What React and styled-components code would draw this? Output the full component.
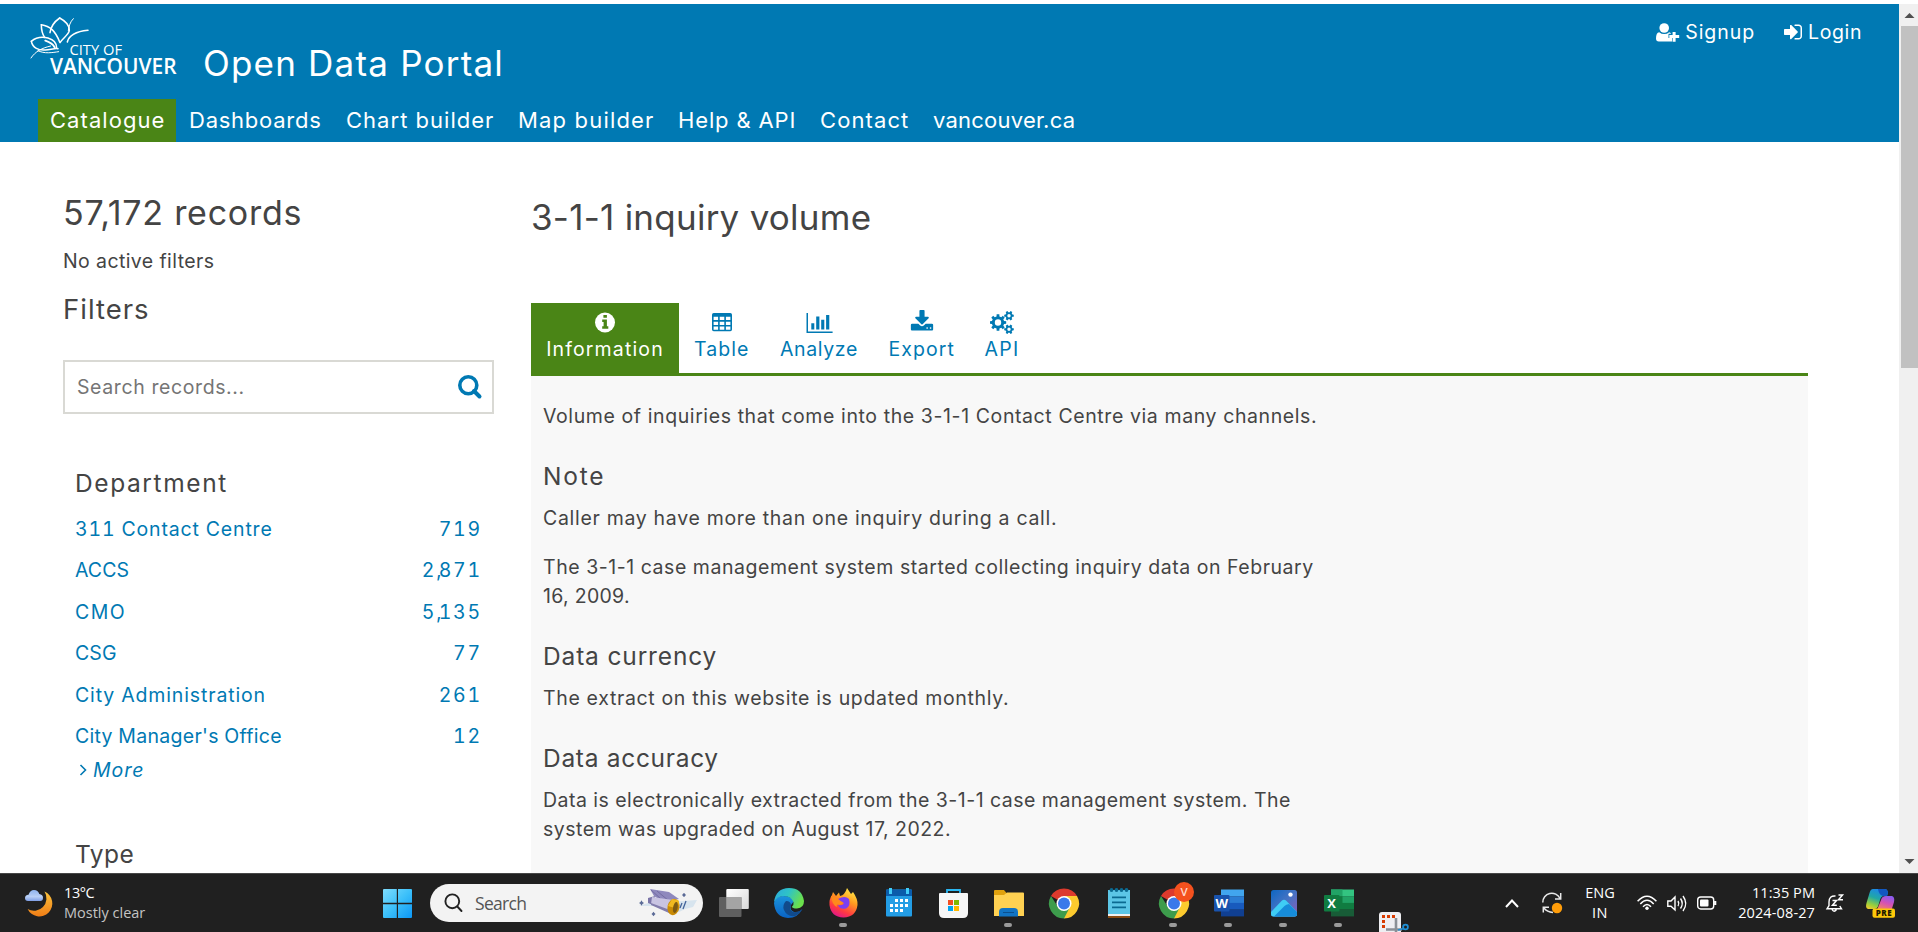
import React from "react";
import styled, { createGlobalStyle } from "styled-components";

const GlobalStyle = createGlobalStyle`
  * { box-sizing: border-box; }
  body { margin: 0; background: #fff; overflow: hidden; }
`;

const sans = '"Inter", "Liberation Sans", sans-serif';
const system = '"Open Sans", "Noto Sans", sans-serif';
const blue = "#0079b3";
const green = "#4a8516";
const ink = "#444";

const Screen = styled.div`
  width: 1918px;
  height: 932px;
  display: flex;
  flex-direction: column;
  overflow: hidden;
  font-family: ${sans};
  color: ${ink};
`;
const Viewport = styled.div`
  height: 869px;
  margin-top: 4px;
  display: flex;
  overflow: hidden;
`;
const Page = styled.div`
  width: 1899px;
  flex: none;
`;

/* Header */
const Header = styled.header`
  height: 138px;
  background: ${blue};
  color: #fff;
`;
const Brand = styled.div`
  height: 95px;
  padding-left: 24px;
  display: flex;
  align-items: flex-start;
`;
const Logo = styled.svg`
  width: 160px;
  height: 70px;
  margin-top: 8px;
  flex: none;
`;
const SiteTitle = styled.div`
  margin: 37px 0 0 19px;
  font-size: 35px;
  line-height: 44px;
  letter-spacing: 1.2px;
  white-space: nowrap;
`;
const Account = styled.div`
  margin: 16px 37px 0 auto;
  display: flex;
  gap: 29px;
`;
const AccountLink = styled.a`
  display: flex;
  align-items: center;
  gap: ${(p) => p.$gap}px;
  font-size: 19.5px;
  line-height: 24px;
  letter-spacing: ${(p) => p.$ls}px;
`;
const Nav = styled.nav`
  display: flex;
  height: 43px;
  padding-left: 38px;
  gap: 1px;
`;
const NavItem = styled.a`
  width: ${(p) => p.$w}px;
  padding-left: 12px;
  font-size: 22px;
  line-height: 43px;
  white-space: nowrap;
  letter-spacing: ${(p) => p.$ls}px;
  background: ${(p) => (p.$active ? green : "transparent")};
`;

/* Scroll bar */
const ScrollBar = styled.div`
  flex: 1;
  background: #f0f0f0;
  display: flex;
  flex-direction: column;
  align-items: flex-end;
  justify-content: space-between;
`;
const ScrollArrow = styled.svg`
  width: 17px;
  height: 22px;
  flex: none;
`;
const Thumb = styled.div`
  width: 17px;
  height: 342px;
  margin-bottom: auto;
  background: #c1c1c1;
`;

/* Body columns */
const Columns = styled.div`
  display: flex;
`;
const Sidebar = styled.aside`
  width: 431px;
  margin: 51px 37px 0 63px;
  flex: none;
`;
const Records = styled.h1`
  margin: 0;
  font-size: 34px;
  font-weight: 400;
  line-height: 40px;
  letter-spacing: 0.75px;
`;
const ActiveFilters = styled.p`
  margin: 13px 0 16px;
  font-size: 19.5px;
  line-height: 30px;
  letter-spacing: 0.4px;
`;
const FiltersTitle = styled.h2`
  margin: 0;
  font-size: 27.5px;
  font-weight: 400;
  line-height: 34px;
  letter-spacing: 1px;
`;
const SearchBox = styled.div`
  height: 54px;
  margin: 34px 0 54px;
  padding: 0 10px 0 12px;
  border: 2px solid #d9d9d4;
  display: flex;
  align-items: center;
  justify-content: space-between;
  font-size: 19.5px;
  letter-spacing: 0.6px;
  color: #757575;
`;
const Facet = styled.section`
  padding-left: 12px;
  width: 419px;
  margin-bottom: 57px;
`;
const FacetTitle = styled.h3`
  margin: 0 0 11px;
  font-size: 24.5px;
  font-weight: 400;
  line-height: 30px;
  letter-spacing: ${(p) => p.$ls}px;
`;
const FacetRow = styled.a`
  display: flex;
  justify-content: space-between;
  font-size: 19.5px;
  line-height: 41.4px;
  color: ${blue};
`;
const FacetName = styled.span`
  letter-spacing: ${(p) => p.$ls}px;
  font-variant-numeric: tabular-nums;
`;
const FacetCount = styled.span`
  letter-spacing: 1.8px;
  font-variant-numeric: tabular-nums;
`;
const Separator = styled.span`
  letter-spacing: -2.8px;
`;
const More = styled.a`
  display: flex;
  align-items: center;
  gap: 6px;
  margin-top: 1px;
  padding-left: 4px;
  font-size: 19.5px;
  line-height: 24px;
  font-style: italic;
  letter-spacing: 1px;
  color: ${blue};
`;

const Main = styled.main`
  width: 1277px;
  margin-top: 53px;
`;
const DatasetTitle = styled.h1`
  margin: 0 0 64px;
  font-size: 35px;
  font-weight: 400;
  line-height: 44px;
  letter-spacing: 0.25px;
`;
const Tabs = styled.div`
  height: 73px;
  display: flex;
  border-bottom: 3px solid ${green};
`;
const Tab = styled.a`
  width: ${(p) => p.$w}px;
  padding-top: 7px;
  display: flex;
  flex-direction: column;
  align-items: center;
  gap: 3px;
  font-size: 19.5px;
  line-height: 24px;
  letter-spacing: ${(p) => p.$ls}px;
  color: ${(p) => (p.$active ? "#fff" : blue)};
  background: ${(p) => (p.$active ? green : "transparent")};
`;
const TabIcon = styled.svg`
  width: ${(p) => p.$w || 24}px;
  height: 24px;
  fill: currentColor;
`;
const Panel = styled.div`
  height: 520px;
  padding: 26px 0 0 12px;
  background: #f8f8f8;
`;
const Paragraph = styled.p`
  margin: 0 0 ${(p) => p.$after ?? 29.5}px;
  font-size: 19.5px;
  line-height: 29.4px;
`;
const Line = styled.span`
  display: block;
  white-space: nowrap;
  letter-spacing: ${(p) => p.$ls}px;
`;
const Heading = styled.h3`
  margin: 0 0 13px;
  font-size: 24.5px;
  font-weight: 400;
  line-height: 30px;
  letter-spacing: ${(p) => p.$ls}px;
`;

/* Taskbar */
const TaskBar = styled.footer`
  height: 59px;
  border-top: 1px solid #474747;
  background: #202020;
  display: flex;
  align-items: center;
  font-family: ${system};
  color: #fff;
`;
const Weather = styled.div`
  width: 383px;
  padding-left: 24px;
  display: flex;
  align-items: center;
  gap: 11px;
  flex: none;
`;
const Lines = styled.div`
  width: ${(p) => (p.$w ? p.$w + "px" : "auto")};
  text-align: ${(p) => p.$align || "left"};
  font-size: 14.5px;
  line-height: 20px;
  white-space: nowrap;
`;
const TextLine = styled.div`
  letter-spacing: ${(p) => p.$ls || 0}px;
  color: ${(p) => (p.$dim ? "#c4c4c4" : "#fff")};
`;
const TaskSearch = styled.div`
  width: 273px;
  height: 38px;
  margin: 0 3px 0 18px;
  padding: 0 4px 0 13px;
  border-radius: 19px;
  background: #f3f3f3;
  display: flex;
  align-items: center;
  flex: none;
`;
const TaskSearchLabel = styled.span`
  margin: 0 auto 0 12px;
  font-size: 17.5px;
  letter-spacing: -0.7px;
  color: #555;
`;
const Apps = styled.div`
  display: flex;
`;
const AppButton = styled.div`
  width: 55px;
  height: 58px;
  padding-top: ${(p) => (p.$low ? 35 : 14)}px;
  display: flex;
  justify-content: center;
  overflow: hidden;
  position: relative;
`;
const RunningDot = styled.i`
  position: absolute;
  left: 23px;
  top: 49px;
  width: 8px;
  height: 4px;
  border-radius: 2px;
  background: #9a9a9a;
`;
const Badge = styled.b`
  position: absolute;
  left: 28px;
  top: 8px;
  width: 20px;
  height: 20px;
  border-radius: 50%;
  background: #f4511e;
  color: #ffd8cc;
  font: 600 11.5px/20px ${system};
  text-align: center;
`;
const Tray = styled.div`
  flex: 1;
  padding-right: 23px;
  display: flex;
  align-items: center;
  justify-content: flex-end;
`;
const TraySlot = styled.div`
  display: flex;
  margin-right: ${(p) => p.$after || 0}px;
`;
const Glyph = styled.svg`
  display: block;
  flex: none;
  overflow: visible;
`;

const VancouverLogo = () => (
  <Logo viewBox="24 12 160 70">
    <g transform="translate(26 12) scale(.3333)" fill="none" stroke="#fff" strokeWidth="4.6" strokeLinecap="round">
      <path d="M101 18C84 30 74 46 72 62" />
      <path d="M101 18C120 28 131 42 130 56C127 70 110 78 102 92" />
      <path d="M142 20C132 30 129 42 127 56" strokeWidth="3" />
      <path d="M46 38C46 54 49 66 56 76" />
      <path d="M46 38C72 42 88 56 101 90" />
      <path d="M186 55C156 58 130 66 124 90" />
      <path d="M16 88C30 76 48 74 66 78C84 83 92 94 92 108" />
      <path d="M16 88C20 108 38 116 58 114C76 112 88 108 96 110" />
      <path d="M58 86C76 92 82 98 86 106" strokeWidth="6" />
      <path d="M15 138C28 118 48 108 74 102" strokeWidth="3" />
      <path d="M36 116C54 126 80 122 98 119" strokeWidth="3" />
    </g>
    <text x="69.5" y="54.5" fill="#fff" fontFamily="Open Sans" fontSize="15" textLength="52.5" lengthAdjust="spacingAndGlyphs">CITY OF</text>
    <text x="50" y="74.4" fill="#fff" fontFamily="Open Sans" fontWeight="600" fontSize="21" textLength="126.5" lengthAdjust="spacingAndGlyphs">VANCOUVER</text>
  </Logo>
);

const UserPlus = () => (
  <Glyph width="24" height="19" viewBox="0 0 24 19" fill="#fff">
    <circle cx="8.2" cy="5" r="4.8" />
    <path d="M3.2 9.2q2.2 1.9 5 1.9t5-1.9q1.2.3 2 1.5h-2.7v4.2h3.5v3.5H2.8Q0 18.400 0 15.500 0 9.800 3.200 9.200z" />
    <path d="M16.600 8.900h3v3.200h3.600v3h-3.600v3.600h-3v-3.600h-3.300v-3h3.300z" />
  </Glyph>
);
const SignIn = () => (
  <Glyph width="18" height="16" viewBox="128 256 1536 1280" fill="#fff">
    <path d="M1312 896q0 26-19 45l-544 544q-19 19-45 19t-45-19-19-45v-288h-448q-26 0-45-19t-19-45v-384q0-26 19-45t45-19h448v-288q0-26 19-45t45-19 45 19l544 544q19 19 19 45zm352-352v704q0 119-84.500 203.500t-203.500 84.500h-320q-32 0-32-32v-64q0-32 32-32h320q66 0 113-47t47-113v-704q0-66-47-113t-113-47h-320q-32 0-32-32v-64q0-32 32-32h320q119 0 203.500 84.500t84.500 203.500z" />
  </Glyph>
);
const Magnifier = () => (
  <Glyph width="24" height="24" viewBox="0 0 24 24" fill="none" stroke={blue}>
    <circle cx="10.300" cy="10.300" r="8.500" strokeWidth="3.600" />
    <path d="M16 16L21.500 21.500" strokeWidth="4" strokeLinecap="round" />
  </Glyph>
);

const InfoIcon = () => (
  <TabIcon viewBox="0 0 24 24">
    <circle cx="12" cy="12.500" r="10" />
    <path fill={green} d="M10.400 4.900h3.500v2.900h-3.500zM9.200 9.600h4.700v6.600h1.400v2.500H9.200v-2.500h1.400v-4.200H9.200z" />
  </TabIcon>
);
const TableIcon = () => (
  <TabIcon viewBox="0 0 24 24">
    <path fillRule="evenodd" d="M3.700 3h16.600q1.700 0 1.700 1.700v14.800q0 1.700-1.700 1.700H3.700Q2 21.200 2 19.500V4.700Q2 3 3.700 3zM3.600 6.800v3.300h4.500V6.800zM9.700 6.800v3.300h4.600V6.800zM15.900 6.800v3.300h4.500V6.800zM3.600 11.700v3.200h4.500v-3.200zM9.700 11.700v3.200h4.600v-3.200zM15.900 11.700v3.200h4.500v-3.200zM3.600 16.500v3.200h4.500v-3.200zM9.700 16.500v3.200h4.600v-3.200zM15.900 16.500v3.200h4.500v-3.200z" />
  </TabIcon>
);
const BarsIcon = () => (
  <TabIcon $w={27} viewBox="0 0 27 24">
    <path d="M.500 3H2v18.400h24.600V23H.500zM5.300 13.200h3v6.400h-3zM10.200 6.600h3.200v13h-3.200zM15.200 9.800h3.100v9.800h-3.100zM20.100 4.900h3.200v14.700h-3.200z" />
  </TabIcon>
);
const DownloadIcon = () => (
  <TabIcon viewBox="32 0 1728 1792">
    <path d="M1344 1344q0-26-19-45t-45-19-45 19-19 45 19 45 45 19 45-19 19-45zm256 0q0-26-19-45t-45-19-45 19-19 45 19 45 45 19 45-19 19-45zm128-224v320q0 40-28 68t-68 28h-1472q-40 0-68-28t-28-68v-320q0-40 28-68t68-28h465l135 136q58 56 136 56t136-56l136-136h464q40 0 68 28t28 68zm-325-569q17 41-14 70l-448 448q-18 19-45 19t-45-19l-448-448q-31-29-14-70 17-39 59-39h256v-448q0-26 19-45t45-19h256q26 0 45 19t19 45v448h256q42 0 59 39z" />
  </TabIcon>
);
const gear = (cx, cy, outer, inner, teeth) => {
  const pts = [];
  for (let i = 0; i < teeth; i++) {
    const a = (i / teeth) * Math.PI * 2;
    const s = Math.PI / teeth;
    [[-0.6, inner], [-0.42, outer], [0.42, outer], [0.6, inner]].forEach(([k, r]) =>
      pts.push(`${(cx + r * Math.cos(a + k * s)).toFixed(2)} ${(cy + r * Math.sin(a + k * s)).toFixed(2)}`)
    );
  }
  return `M${pts.join("L")}z`;
};
const hole = (cx, cy, r) => `M${cx - r} ${cy}a${r} ${r} 0 1 0 ${2 * r} 0a${r} ${r} 0 1 0 ${-2 * r} 0z`;
const CogsIcon = () => (
  <TabIcon viewBox="0 0 24 24">
    <path fillRule="evenodd" d={gear(8, 12.5, 8.3, 6.2, 8) + hole(8, 12.5, 3.2)} />
    <path fillRule="evenodd" d={gear(19, 5.7, 4.9, 3.6, 6) + hole(19, 5.7, 1.7)} />
    <path fillRule="evenodd" d={gear(19, 19.3, 4.9, 3.6, 6) + hole(19, 19.3, 1.7)} />
  </TabIcon>
);

const navItems = [
  ["Catalogue", 138, 1.05],
  ["Dashboards", 156, 0.75],
  ["Chart builder", 171, 1.02],
  ["Map builder", 159, 1.18],
  ["Help & API", 141, 0.85],
  ["Contact", 112, 1.1],
  ["vancouver.ca", 160, 0.23],
];
const departments = [
  ["311 Contact Centre", "719", 0.83],
  ["ACCS", "2,871", 0.08],
  ["CMO", "5,135", 1.4],
  ["CSG", "77", 0.12],
  ["City Administration", "261", 0.86],
  ["City Manager's Office", "12", 0.29],
];
const tabs = [
  ["Information", 148, 1.15, InfoIcon],
  ["Table", 85.5, 1.05, TableIcon],
  ["Analyze", 109, 0.64, BarsIcon],
  ["Export", 96.5, 1.07, DownloadIcon],
  ["API", 64, 1.3, CogsIcon],
];

/* Taskbar drawings */
const MoonIcon = () => (
  <Glyph width="29" height="29" viewBox="0 0 29 29">
    <defs>
      <linearGradient id="moon" x1="0" y1="0" x2="0" y2="1"><stop stopColor="#fbc33c" /><stop offset="1" stopColor="#f07d16" /></linearGradient>
      <linearGradient id="cloud" x1="0" y1="0" x2="0" y2="1"><stop stopColor="#8fb3ee" /><stop offset=".6" stopColor="#b9d0f6" /><stop offset="1" stopColor="#7f9fe6" /></linearGradient>
    </defs>
    <path fill="url(#moon)" d="M20.500 2.500A13 13 0 1 1 3.600 20A12.500 12.500 0 0 0 20.500 2.500z" />
    <path fill="url(#cloud)" d="M4 12Q1 12 1 9t3.500-3.300Q6 1 10 1t5.300 4Q19 5.500 19 8.800T16 12z" />
  </Glyph>
);
const WindowsLogo = () => (
  <Glyph width="29" height="29" viewBox="0 0 29 29">
    <defs><linearGradient id="win" gradientUnits="userSpaceOnUse" x1="0" y1="0" x2="29" y2="29"><stop stopColor="#7fdcfc" /><stop offset=".5" stopColor="#3cc0fa" /><stop offset="1" stopColor="#0c97f6" /></linearGradient></defs>
    <path fill="url(#win)" d="M0 1q0-1 1-1h12.800v13.800H0zM15 0h13q1 0 1 1v12.800H15zM0 15.200h13.800V29H1q-1 0-1-1zM15 15.200h14V28q0 1-1 1H15z" />
  </Glyph>
);
const ThinSearch = () => (
  <Glyph width="20" height="20" viewBox="0 0 20 20" fill="none" stroke="#222" strokeWidth="1.900" strokeLinecap="round">
    <circle cx="9.300" cy="8.300" r="6.900" /><path d="M14.300 13.500L18.500 18" />
  </Glyph>
);
const Telescope = () => (
  <Glyph width="60" height="30" viewBox="0 0 60 30">
    <path fill="#cfe0ec" opacity=".8" d="M0 18L18 12L30 14L58 12L54 19L46 21L40 24L18 18z" />
    <path fill="#8e88bd" d="M11 1L30 4L40 11L24 14L15 8z" />
    <path fill="#b7b1dc" d="M12 2L22 11M18 3L30 13" stroke="#6c6599" strokeWidth=".8" />
    <path fill="#7b75a8" d="M9 10L16 8L14 17L9 15z" />
    <path fill="#c9c4e2" d="M13 9L34 12L31 25L12 16z" />
    <path fill="#837dac" d="M12 15L31 22L30 25L12 17z" />
    <ellipse cx="34.500" cy="19" rx="6" ry="8.300" fill="#c98a05" transform="rotate(12 34.500 19)" />
    <path fill="#f0b920" d="M33 11L39 12Q41 13 39 18L36 20L29 18z" />
    <ellipse cx="36.500" cy="19.500" rx="2.300" ry="5.500" fill="#7d5a12" transform="rotate(12 36.500 19)" />
    <path stroke="#42639a" strokeWidth="1.300" d="M41 20L43 15M44 21L47 13" />
    <path fill="#5a6a96" d="M1.500 14l1-1.800 1 1.800 1.500 1-1.500 1-1 1.800-1-1.800L0 15zM44 6l1-1.300 1 1.300 1 1-1 1-1 1.300L44 8l-1-1zM13.500 25l1-1.300 1 1.300 1 1-1 1-1 1.300-1-1.300-1-1z" />
  </Glyph>
);
const TaskView = () => (
  <Glyph width="30" height="30" viewBox="0 0 30 30">
    <defs><linearGradient id="tv" x1="0" y1="0" x2="1" y2="1"><stop stopColor="#fff" /><stop offset="1" stopColor="#d9d9d9" /></linearGradient></defs>
    <rect x="7.300" y="1" width="22.500" height="20" rx="1" fill="url(#tv)" />
    <rect x="0" y="9" width="22.500" height="20" rx="1" fill="#686868" opacity=".88" />
    <path fill="#a4a4a4" d="M7.300 9h15.200v12H7.300z" />
  </Glyph>
);
const Edge = () => (
  <Glyph width="30" height="30" viewBox="0 0 30 30">
    <defs>
      <linearGradient id="eg1" x1="0" y1="0" x2="1" y2=".4"><stop stopColor="#2aa8e0" /><stop offset=".5" stopColor="#2fc3c6" /><stop offset="1" stopColor="#6be04c" /></linearGradient>
      <linearGradient id="eg2" x1="0" y1="0" x2="0" y2="1"><stop stopColor="#1b93dc" /><stop offset="1" stopColor="#0a63c4" /></linearGradient>
    </defs>
    <path fill="url(#eg2)" d="M0 15Q1 8 9 8T20 13L17 17Q15 22 20 24Q25 25 28 21Q24 30 14 30Q1 29 0 15z" />
    <path fill="#114a8b" d="M12 13Q8 17 10 22Q13 29 21 28Q26 26 28.500 21Q24 25 19 24Q14 21 17 17.500Q17 13 12 13z" />
    <path fill="url(#eg1)" d="M0 14Q2 0 15 0Q28 0 30 13Q30 20 23 20.500Q18 20.500 18 18.500Q20 17 19.500 14Q17 8 10 8Q3 8 0 14z" />
  </Glyph>
);
const Firefox = () => (
  <Glyph width="29" height="30" viewBox="0 0 29 30">
    <defs>
      <linearGradient id="ff" x1=".8" y1="0" x2=".3" y2="1"><stop stopColor="#fff04a" /><stop offset=".4" stopColor="#ff9a20" /><stop offset=".75" stopColor="#ff3a42" /><stop offset="1" stopColor="#e0158c" /></linearGradient>
    </defs>
    <path fill="url(#ff)" d="M18 0Q20 3 22 6L24 4Q29 11 28.500 17Q27 29 14.500 29.500Q2 29 .500 17Q0 11 3 7L4 4L7 8L10 4.500L11 8Q16 7 18 0z" />
    <path fill="#7a3ff0" d="M9 11Q16 7 20 11Q22 18 17 20.500Q11 22 9 17Q14 18 15 15Q12 14 9 11z" />
    <path fill="#ff8a1c" d="M2 8L7 9L10 12L14 14.500Q13 17.500 9 16.500Q7 16 8 19Q3 17 2 8z" />
  </Glyph>
);
const Calendar = () => (
  <Glyph width="26" height="30" viewBox="0 0 26 30">
    <rect y="1.500" width="26" height="27" rx="1" fill="#239de5" />
    <path fill="#0a5cab" d="M1 1.500h24q1 0 1 1V8H0V2.500q0-1 1-1z" />
    <path fill="#41cdf8" d="M3 0h3v6H3zM20 0h3v6h-3z" />
    <path fill="#fff" d="M9 11h3v3H9zM14 11h3v3h-3zM19 11h3v3h-3zM4 16h3v3H4zM9 16h3v3H9zM14 16h3v3h-3zM19 16h3v3h-3zM4 21h3v3H4zM9 21h3v3H9zM14 21h3v3h-3z" />
  </Glyph>
);
const Store = () => (
  <Glyph width="29" height="30" viewBox="0 0 29 30">
    <path fill="none" stroke="#2bb7f2" strokeWidth="1.800" d="M8 7V2h13v5" />
    <path fill="#f6f6f6" d="M0 6q0-1 1-1h27q1 0 1 1v19q0 5-5 5H5q-5 0-5-5z" />
    <path fill="#f25022" d="M9 12h5v5H9z" /><path fill="#7fba00" d="M15 12h5v5h-5z" /><path fill="#00a4ef" d="M9 18h5v5H9z" /><path fill="#ffb900" d="M15 18h5v5h-5z" />
  </Glyph>
);
const Folder = () => (
  <Glyph width="30" height="30" viewBox="0 0 30 30">
    <path fill="#e0a10e" d="M0 3q0-1 1-1h9l2.500 3v3H0z" />
    <path fill="#ffd152" d="M0 7l10 0 3-2.500h16q1 0 1 1V28H0z" />
    <path fill="#1274c4" d="M5 24q0-4 4-4h11q4 0 4 4v4.500H5z" /><path fill="#0b4f8d" d="M9 24h11v1H9z" />
  </Glyph>
);
const Chrome = () => (
  <Glyph width="30" height="31" viewBox="0 0 30 30">
    <path fill="#dc3a2d" d="M15 15L2 7.500A15 15 0 0 1 28 7.500z" />
    <path fill="#fcca2e" d="M15 15L15 7.500L28 7.500A15 15 0 0 1 15 30z" />
    <path fill="#3d9c4c" d="M15 30A15 15 0 0 1 2 7.500L9 18.500L21 18.500z" />
    <circle cx="15" cy="15" r="7.500" fill="#fff" /><circle cx="15" cy="15" r="6" fill="#3a79ea" />
  </Glyph>
);
const Notepad = () => (
  <Glyph width="22" height="30" viewBox="0 0 22 30">
    <path fill="#8a4b12" d="M0 26h22v4H0z" /><path fill="#f0f0f0" d="M0 25h22v3H0z" />
    <path fill="#5cc6e6" d="M0 2h22v24H0z" />
    <g fill="#0b6a91"><circle cx="3.500" cy="2" r="1.900" /><circle cx="8.500" cy="2" r="1.900" /><circle cx="13.500" cy="2" r="1.900" /><circle cx="18.500" cy="2" r="1.900" /><path d="M4 8.500h14v1.800H4zM4 13.500h14v1.800H4zM4 18.500h14v1.800H4z" /></g>
  </Glyph>
);
const Office = ({ stripes, box, letter }) => (
  <Glyph width="30" height="30" viewBox="0 0 30 30">
    {stripes.map((c, i) => <rect key={i} x="7" y={1.5 + i * 6.7} width="23" height="6.800" fill={c} />)}
    {letter === "X" && <path fill="#21a366" d="M7 1.500h11.500v6.700H7z" />}
    {letter === "X" && <path fill="#107c41" d="M7 8.200h11.500v6.800H7z" />}
    <rect y="7" width="15.500" height="16.500" rx="1" fill={box} />
    <text x="7.700" y="19.800" textAnchor="middle" fontFamily="Open Sans" fontWeight="700" fontSize="13" fill="#fff">{letter}</text>
  </Glyph>
);
const Photos = () => (
  <Glyph width="26" height="30" viewBox="0 0 26 30">
    <defs><linearGradient id="ph" x1="0" y1="0" x2="1" y2="1"><stop stopColor="#0d66c2" /><stop offset=".5" stopColor="#4673c4" /><stop offset="1" stopColor="#8b5bb6" /></linearGradient></defs>
    <rect y="2" width="26" height="26.500" rx="2.500" fill="url(#ph)" />
    <path fill="#3fcdf5" d="M0 24L10.500 13Q13 10.500 15.500 13L26 24V26q0 2.500-2.500 2.500H2.500Q0 28.500 0 26z" />
    <path fill="#168cda" d="M3 28.500L13.500 18Q15 16.500 18 16L26 24V26q0 2.500-2.500 2.500z" />
    <circle cx="19.500" cy="6.600" r="2.200" fill="#fff" />
  </Glyph>
);
const Snip = () => (
  <Glyph width="30" height="30" viewBox="0 0 30 30">
    <path fill="#eeeef2" d="M0 6q0-3 3-3h16q3 0 3 3v26H0z" />
    <path fill="#d83b01" d="M3 6h3v3H3zM8 6h3v3H8zM13 6h3v3h-3zM3 11h3v3H3zM3 16h3v3H3z" />
    <path fill="none" stroke="#8a8f96" strokeWidth="2.600" d="M17 9V24M7 20.500H23" />
    <circle cx="26.500" cy="18" r="2.400" fill="none" stroke="#1f8fd4" strokeWidth="1.800" />
    <path stroke="#1f8fd4" strokeWidth="1.800" d="M19 21L25 19.500" />
  </Glyph>
);

const apps = [
  { icon: <TaskView /> },
  { icon: <Edge /> },
  { icon: <Firefox />, running: true },
  { icon: <Calendar /> },
  { icon: <Store /> },
  { icon: <Folder />, running: true },
  { icon: <Chrome /> },
  { icon: <Notepad /> },
  { icon: <Chrome />, running: true, badge: "V" },
  { icon: <Office letter="W" box="#1953ad" stripes={["#41a5ee", "#2b7cd3", "#185abd", "#103f91"]} />, running: true },
  { icon: <Photos />, running: true },
  { icon: <Office letter="X" box="#107c41" stripes={["#33c481", "#21a366", "#107c41", "#185c37"]} />, running: true },
  { icon: <Snip />, low: true },
];

const SystemTray = () => (
  <Tray>
    <TraySlot $after={23}>
      <Glyph width="14" height="9" viewBox="0 0 14 9" fill="none" stroke="#fff" strokeWidth="2"><path d="M1 8L7 1.500L13 8" /></Glyph>
    </TraySlot>
    <TraySlot $after={22}>
      <Glyph width="20" height="20" viewBox="0 0 20 20" fill="none" stroke="#e8e8e8" strokeWidth="1.500">
        <path d="M.800 9.500A9 9 0 0 1 18 5.500M18.700 0V6H13M11 19.500Q5 19 2 15M1.300 19.500V14.300H7" />
        <circle cx="15" cy="15" r="5.200" fill="#ff9d0a" stroke="none" />
      </Glyph>
    </TraySlot>
    <TraySlot $after={21}>
      <Lines $w={32} $align="center"><TextLine>ENG</TextLine><TextLine $ls={0.5}>IN</TextLine></Lines>
    </TraySlot>
    <TraySlot $after={10}>
      <Glyph width="20" height="16" viewBox="0 0 20 16" fill="none" stroke="#fff" strokeWidth="1.500">
        <path d="M.600 6.300Q10-4 19.400 6.300M3.300 9Q10 1.600 16.700 9M6 11.800Q10 7.300 14 11.800" /><circle cx="10" cy="13.300" r="1.700" fill="#fff" stroke="none" />
      </Glyph>
    </TraySlot>
    <TraySlot $after={10}>
      <Glyph width="20" height="17" viewBox="0 0 20 17" fill="none" stroke="#fff" strokeWidth="1.400">
        <path d="M.800 6H4L8 2V15L4 11.300H.800zM11 6Q12.600 8.500 11 11M13.500 3.500Q17 8.500 13.500 13.500M16 1Q21.500 8.500 16 16" />
      </Glyph>
    </TraySlot>
    <TraySlot $after={20}>
      <Glyph width="20" height="14" viewBox="0 0 20 14" fill="none" stroke="#fff" strokeWidth="1.400">
        <rect x=".700" y="1" width="16" height="12" rx="3" /><rect x="3" y="3.500" width="8.500" height="7" rx="1" fill="#fff" stroke="none" /><path d="M18.200 5V9" strokeWidth="2.200" />
      </Glyph>
    </TraySlot>
    <TraySlot $after={11}>
      <Lines $w={78} $align="right"><TextLine $ls={0.06}>11:35 PM</TextLine><TextLine $ls={0.12}>2024-08-27</TextLine></Lines>
    </TraySlot>
    <TraySlot $after={22}>
      <Glyph width="18" height="19" viewBox="0 0 18 19" fill="none" stroke="#fff" strokeWidth="1.400">
        <path d="M9.500 2Q3 1.500 3 8V11.500L1 14.800H15.500L13.800 12M6 15.500Q8 19 10.500 15.500" />
        <path d="M6.500 6.500H10.500L6.500 11.200H10.800M12.500 1H16.500L12.500 5.800H17" strokeWidth="1.500" />
      </Glyph>
    </TraySlot>
    <TraySlot>
      <Glyph width="29" height="29" viewBox="0 0 29 29">
        <defs>
          <linearGradient id="cp1" x1=".6" y1="0" x2=".2" y2="1"><stop stopColor="#1c85ec" /><stop offset=".45" stopColor="#21a8a4" /><stop offset=".8" stopColor="#9bcf3b" /><stop offset="1" stopColor="#e8c92d" /></linearGradient>
          <linearGradient id="cp2" x1=".7" y1="0" x2=".3" y2="1"><stop stopColor="#8a5cf0" /><stop offset=".5" stopColor="#d552b4" /><stop offset="1" stopColor="#f5855c" /></linearGradient>
        </defs>
        <path fill="url(#cp1)" d="M7 0H19Q21.500 0 22 4L21 7H18Q15 7 14 11L12.500 16Q11.500 20 8 20H2Q-1 19 .500 14L3.500 4Q4.500 0 7 0z" />
        <path fill="#1257c0" d="M12 0H19Q21.500 0 22 4L21 7H17Q13 6 12 0z" />
        <path fill="url(#cp2)" d="M20 7H26Q29 8 28 13L25.500 21H11L15 11Q16 7 20 7z" />
        <rect x="6.500" y="19.500" width="22.500" height="9.300" rx="2" fill="#fdc80a" />
        <text x="17.900" y="27.100" textAnchor="middle" fontFamily="Open Sans" fontWeight="800" fontSize="8" letterSpacing=".5" fill="#1d1a00">PRE</text>
      </Glyph>
    </TraySlot>
  </Tray>
);

const Count = ({ value }) => {
  const [head, tail] = value.split(",");
  return (
    <FacetCount>
      {head}
      {tail && <><Separator>,</Separator>{tail}</>}
    </FacetCount>
  );
};

export default function App() {
  return (
    <Screen>
      <GlobalStyle />
      <Viewport>
        <Page>
          <Header>
            <Brand>
              <VancouverLogo />
              <SiteTitle>Open Data Portal</SiteTitle>
              <Account>
                <AccountLink $gap={5} $ls={0.95}><UserPlus />Signup</AccountLink>
                <AccountLink $gap={6} $ls={0.6}><SignIn />Login</AccountLink>
              </Account>
            </Brand>
            <Nav>
              {navItems.map(([label, w, ls], i) => (
                <NavItem key={label} $w={w} $ls={ls} $active={i === 0}>{label}</NavItem>
              ))}
            </Nav>
          </Header>
          <Columns>
            <Sidebar>
              <Records>57,172 records</Records>
              <ActiveFilters>No active filters</ActiveFilters>
              <FiltersTitle>Filters</FiltersTitle>
              <SearchBox>Search records...<Magnifier /></SearchBox>
              <Facet>
                <FacetTitle $ls={1.6}>Department</FacetTitle>
                {departments.map(([name, count, ls]) => (
                  <FacetRow key={name}>
                    <FacetName $ls={ls}>{name}</FacetName>
                    <Count value={count} />
                  </FacetRow>
                ))}
                <More>
                  <Glyph width="8" height="12" viewBox="0 0 8 12" fill="none" stroke={blue} strokeWidth="1.600"><path d="M1.500 1L6.500 6L1.500 11" /></Glyph>
                  More
                </More>
              </Facet>
              <Facet>
                <FacetTitle $ls={0.5}>Type</FacetTitle>
              </Facet>
            </Sidebar>
            <Main>
              <DatasetTitle>3-1-1 inquiry volume</DatasetTitle>
              <Tabs>
                {tabs.map(([label, w, ls, Icon], i) => (
                  <Tab key={label} $w={w} $ls={ls} $active={i === 0}><Icon />{label}</Tab>
                ))}
              </Tabs>
              <Panel>
                <Paragraph>
                  <Line $ls={0.597}>Volume of inquiries that come into the 3-1-1 Contact Centre via many channels.</Line>
                </Paragraph>
                <Heading $ls={1.8}>Note</Heading>
                <Paragraph $after={19.5}>
                  <Line $ls={0.69}>Caller may have more than one inquiry during a call.</Line>
                </Paragraph>
                <Paragraph>
                  <Line $ls={0.54}>The 3-1-1 case management system started collecting inquiry data on February</Line>
                  <Line $ls={0.305}>16, 2009.</Line>
                </Paragraph>
                <Heading $ls={0.85}>Data currency</Heading>
                <Paragraph>
                  <Line $ls={0.66}>The extract on this website is updated monthly.</Line>
                </Paragraph>
                <Heading $ls={0.7}>Data accuracy</Heading>
                <Paragraph>
                  <Line $ls={0.48}>Data is electronically extracted from the 3-1-1 case management system. The</Line>
                  <Line $ls={0.48}>system was upgraded on August 17, 2022.</Line>
                </Paragraph>
              </Panel>
            </Main>
          </Columns>
        </Page>
        <ScrollBar>
          <ScrollArrow viewBox="0 0 17 22"><path fill="#505050" d="M3.500 14L8.500 9L13.500 14z" /></ScrollArrow>
          <Thumb />
          <ScrollArrow viewBox="0 0 17 22"><path fill="#505050" d="M3.500 8L8.500 13L13.500 8z" /></ScrollArrow>
        </ScrollBar>
      </Viewport>
      <TaskBar>
        <Weather>
          <MoonIcon />
          <Lines><TextLine $ls={-0.4}>13°C</TextLine><TextLine $dim>Mostly clear</TextLine></Lines>
        </Weather>
        <WindowsLogo />
        <TaskSearch>
          <ThinSearch />
          <TaskSearchLabel>Search</TaskSearchLabel>
          <Telescope />
        </TaskSearch>
        <Apps>
          {apps.map((a, i) => (
            <AppButton key={i} $low={a.low}>
              {a.icon}
              {a.badge && <Badge>{a.badge}</Badge>}
              {a.running && <RunningDot />}
            </AppButton>
          ))}
        </Apps>
        <SystemTray />
      </TaskBar>
    </Screen>
  );
}
